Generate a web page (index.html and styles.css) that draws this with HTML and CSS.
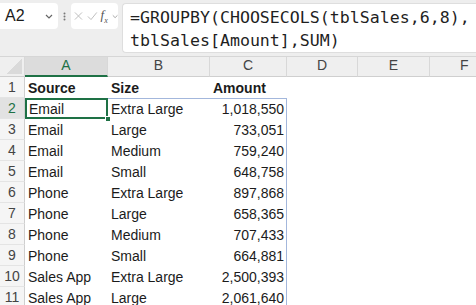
FILE: index.html
```html
<!DOCTYPE html>
<html lang="en">
<head>
    <meta charset="UTF-8">
    <title>GROUPBY</title>
    <link rel="stylesheet" href="styles.css">
</head>
<body>
    <div class="formula-bar">
        <div class="name-box">
            <span>A2</span>
            <svg class="chevron" width="8" height="5" viewBox="0 0 8 5"><path d="M1 1l3 3 3-3" fill="none" stroke="#666" stroke-width="1.2"/></svg>
        </div>
        <div class="grip">
            <svg width="3" height="9" viewBox="0 0 3 9"><circle cx="1.5" cy="1.5" r="1" fill="#777"/><circle cx="1.5" cy="4.5" r="1" fill="#777"/><circle cx="1.5" cy="7.5" r="1" fill="#777"/></svg>
        </div>
        <div class="fx-box">
            <svg width="10" height="10" viewBox="0 0 10 10"><path d="M1 1l8 8M9 1l-8 8" stroke="#bdbdbd" stroke-width="1.1"/></svg>
            <svg width="12" height="10" viewBox="0 0 12 10"><path d="M1 5.5l3.5 3.5L11 1" fill="none" stroke="#bdbdbd" stroke-width="1.1"/></svg>
            <span class="fx">f<sub>x</sub></span>
            <svg width="7" height="5" viewBox="0 0 8 5"><path d="M1 1l3 3 3-3" fill="none" stroke="#999" stroke-width="1.1"/></svg>
        </div>
        <div class="formula">=GROUPBY(CHOOSECOLS(tblSales,6,8),<br>tblSales[Amount],SUM)</div>
    </div>

    <table class="sheet">
        <colgroup>
            <col class="c-head"><col class="c-a"><col class="c-b"><col class="c-c">
            <col class="c-d"><col class="c-e"><col>
        </colgroup>
        <tr class="col-heads">
            <th class="corner"></th>
            <th class="active">A</th><th>B</th><th>C</th><th>D</th><th>E</th><th class="last">F</th>
        </tr>
        <tr>
            <th class="row-head">1</th>
            <td class="bold">Source</td><td class="bold">Size</td><td class="bold">Amount</td><td></td><td></td><td></td>
        </tr>
        <tr>
            <th class="row-head active">2</th>
            <td class="selected">Email</td><td class="spill-top">Extra Large</td><td class="num spill-top spill-right">1,018,550</td><td></td><td></td><td></td>
        </tr>
        <tr>
            <th class="row-head">3</th>
            <td>Email</td><td>Large</td><td class="num spill-right">733,051</td><td></td><td></td><td></td>
        </tr>
        <tr>
            <th class="row-head">4</th>
            <td>Email</td><td>Medium</td><td class="num spill-right">759,240</td><td></td><td></td><td></td>
        </tr>
        <tr>
            <th class="row-head">5</th>
            <td>Email</td><td>Small</td><td class="num spill-right">648,758</td><td></td><td></td><td></td>
        </tr>
        <tr>
            <th class="row-head">6</th>
            <td>Phone</td><td>Extra Large</td><td class="num spill-right">897,868</td><td></td><td></td><td></td>
        </tr>
        <tr>
            <th class="row-head">7</th>
            <td>Phone</td><td>Large</td><td class="num spill-right">658,365</td><td></td><td></td><td></td>
        </tr>
        <tr>
            <th class="row-head">8</th>
            <td>Phone</td><td>Medium</td><td class="num spill-right">707,433</td><td></td><td></td><td></td>
        </tr>
        <tr>
            <th class="row-head">9</th>
            <td>Phone</td><td>Small</td><td class="num spill-right">664,881</td><td></td><td></td><td></td>
        </tr>
        <tr>
            <th class="row-head">10</th>
            <td>Sales App</td><td>Extra Large</td><td class="num spill-right">2,500,393</td><td></td><td></td><td></td>
        </tr>
        <tr>
            <th class="row-head">11</th>
            <td>Sales App</td><td>Large</td><td class="num spill-right">2,061,640</td><td></td><td></td><td></td>
        </tr>
    </table>
</body>
</html>
```

FILE: styles.css
```css
body {
    margin: 0;
    overflow: hidden;
    background: #fff;
    font-family: "Liberation Sans", Arial, sans-serif;
    color: #1b1b1b;
}

.formula-bar {
    display: flex;
    align-items: flex-start;
    height: 53px;
    padding-top: 3px;
    background: #eeeeee;
    border-bottom: 1px solid #d6d6d6;
}

.name-box {
    display: flex;
    align-items: center;
    justify-content: space-between;
    width: 58px;
    height: 26px;
    box-sizing: border-box;
    padding: 0 5px 0 5px;
    background: #fff;
    border-radius: 0 4px 4px 0;
    font-size: 16px;
}

.grip {
    display: flex;
    justify-content: center;
    align-items: center;
    width: 13px;
    height: 26px;
}

.fx-box {
    display: flex;
    align-items: center;
    gap: 4px;
    width: 47px;
    height: 26px;
    box-sizing: border-box;
    padding-left: 3px;
    background: #fff;
    border-radius: 4px;
}

.fx {
    font-family: "Liberation Serif", serif;
    font-style: italic;
    font-size: 13px;
    color: #555;
    margin-left: -1px;
}

.fx sub {
    font-size: 8px;
}

.formula {
    flex: 1;
    min-width: 0;
    height: 50px;
    margin-left: 4px;
    box-sizing: border-box;
    padding: 2px 0 0 7px;
    background: #fff;
    border: 1px solid #dedede;
    border-right: none;
    border-radius: 4px 0 0 4px;
    font-family: "DejaVu Sans Mono", "Liberation Mono", monospace;
    font-size: 16.6px;
    line-height: 23px;
    white-space: nowrap;
    overflow: hidden;
    color: #1f1f1f;
}

.sheet {
    table-layout: fixed;
    border-collapse: separate;
    border-spacing: 0;
    width: 476px;
    font-size: 14px;
}

.c-head { width: 25px; }
.c-a { width: 83px; }
.c-b { width: 102px; }
.c-c { width: 77px; }
.c-d { width: 71px; }
.c-e { width: 72px; }

.sheet th,
.sheet td {
    height: 21px;
    padding: 0 3px 1px 3px;
    box-sizing: border-box;
    line-height: 17px;
    vertical-align: bottom;
    white-space: nowrap;
    overflow: hidden;
}

.col-heads th {
    height: 20px;
    padding-bottom: 2px;
    background: #efefef;
    border-right: 1px solid #d8d8d8;
    border-bottom: 1px solid #cfcfcf;
    font-weight: normal;
    color: #444;
    text-align: center;
}

/* column F runs past the window, so its letter sits right of centre */
.sheet .col-heads th.last {
    border-right: none;
    text-align: left;
    padding-left: 30px;
}

.col-heads th.active {
    background: #dcdcdc;
    color: #1e7145;
    border-bottom: 2px solid #1e7145;
    padding-bottom: 1px;
}

.col-heads .corner {
    background-color: #efefef;
    background-image: linear-gradient(135deg, transparent 50%, #dadada 50%);
    background-size: 16px 16px;
    background-position: right 2px bottom 2px;
    background-repeat: no-repeat;
}

.sheet .row-head {
    background: #f5f5f5;
    border-right: 1px solid #cfcfcf;
    border-bottom: 1px solid #e4e4e4;
    font-weight: normal;
    color: #444;
    text-align: center;
    padding: 0 0 1px 0;
}

.sheet .row-head.active {
    background: #e2e2e2;
    color: #1e7145;
}

.bold {
    font-weight: bold;
}

.num {
    text-align: right;
}

.spill-top {
    box-shadow: inset 0 1px 0 #a3b7dc;
}

.spill-right {
    box-shadow: inset -1px 0 0 #a3b7dc;
}

.spill-top.spill-right {
    box-shadow: inset 0 1px 0 #a3b7dc, inset -1px 0 0 #a3b7dc;
}

.sheet td.selected {
    position: relative;
    overflow: visible;
    padding-left: 4px;
    box-shadow: inset 0 0 0 2px #1e7145;
}

.selected::after {
    content: "";
    position: absolute;
    right: -3px;
    bottom: -3px;
    width: 4px;
    height: 4px;
    background: #1e7145;
    border: 1px solid #fff;
}
```
